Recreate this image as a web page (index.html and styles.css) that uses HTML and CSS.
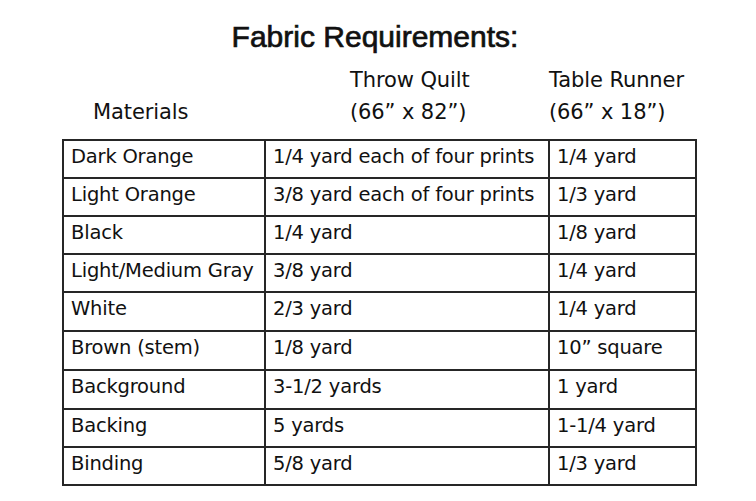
FILE: index.html
```html
<!DOCTYPE html>
<html>
<head>
<meta charset="utf-8">
<link rel="stylesheet" href="styles.css">
</head>
<body>
<div class="page">
  <h1 class="title">Fabric Requirements:</h1>
  <div class="heads">
    <div class="head head-mat"><span class="spacer">&nbsp;</span><span>Materials</span></div>
    <div class="head head-quilt"><span>Throw Quilt</span><span>(66” x 82”)</span></div>
    <div class="head head-runner"><span>Table Runner</span><span>(66” x 18”)</span></div>
  </div>
  <table class="reqs">
    <colgroup><col class="c1"><col class="c2"><col class="c3"></colgroup>
    <tbody>
      <tr><td>Dark Orange</td><td>1/4 yard each of four prints</td><td>1/4 yard</td></tr>
      <tr><td>Light Orange</td><td>3/8 yard each of four prints</td><td>1/3 yard</td></tr>
      <tr><td>Black</td><td>1/4 yard</td><td>1/8 yard</td></tr>
      <tr><td>Light/Medium Gray</td><td>3/8 yard</td><td>1/4 yard</td></tr>
      <tr class="tall"><td>White</td><td>2/3 yard</td><td>1/4 yard</td></tr>
      <tr class="tall"><td>Brown (stem)</td><td>1/8 yard</td><td>10” square</td></tr>
      <tr class="tall"><td>Background</td><td>3-1/2 yards</td><td>1 yard</td></tr>
      <tr><td>Backing</td><td>5 yards</td><td>1-1/4 yard</td></tr>
      <tr><td>Binding</td><td>5/8 yard</td><td>1/3 yard</td></tr>
    </tbody>
  </table>
</div>
</body>
</html>
```
FILE: styles.css
```css
html, body {
  margin: 0;
  padding: 0;
  background: #ffffff;
}
body {
  font-family: "DejaVu Sans", "Liberation Sans", sans-serif;
  color: #111111;
}
.page {
  width: 633px;
  margin-left: 62px;
  padding-top: 19px;
}
.title {
  margin: 0;
  font-family: "Liberation Sans", "DejaVu Sans", sans-serif;
  font-weight: normal;
  font-size: 30px;
  line-height: 36px;
  -webkit-text-stroke: 0.7px #111111;
  text-align: center;
  padding-right: 7px;
}
.heads {
  margin-top: 9px;
  display: grid;
  grid-template-columns: 202px 284px 147px;
  font-size: 21px;
  line-height: 32px;
  letter-spacing: -0.1px;
}
.head {
  display: flex;
  flex-direction: column;
}
.head-mat { padding-left: 31px; }
.head-quilt { padding-left: 86px; }
.head-runner { padding-left: 1px; }
.reqs {
  margin-top: 11px;
  border-collapse: collapse;
  width: 633px;
  table-layout: fixed;
  font-size: 19.5px;
  letter-spacing: -0.2px;
}
.c1 { width: 202px; }
.c2 { width: 284px; }
.c3 { width: 147px; }
.reqs td {
  border: 2px solid #262626;
  height: 38px;
  box-sizing: border-box;
  padding: 4px 0 0 7px;
  line-height: 24px;
  vertical-align: top;
  white-space: nowrap;
}
.reqs tr.tall td { height: 39px; }
```
